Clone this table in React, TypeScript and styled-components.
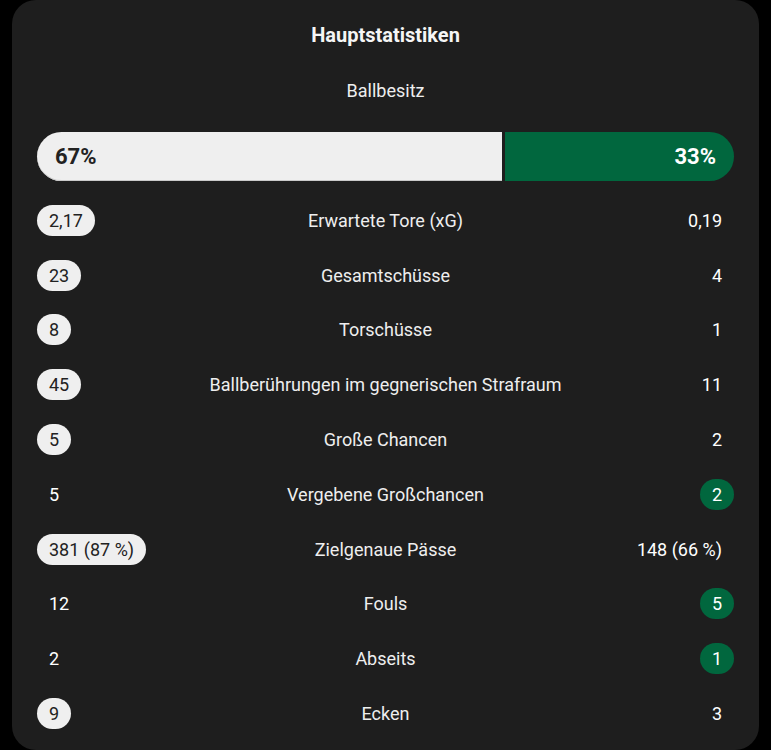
import React from "react";
import styled, { createGlobalStyle } from "styled-components";

const Global = createGlobalStyle`
  html, body { margin: 0; padding: 0; background: #000; }
  body { font-family: Roboto, "Noto Sans", sans-serif; }
`;

const Card = styled.div`
  box-sizing: border-box;
  width: 747px;
  height: 750px;
  margin-left: 12px;
  background: #1e1e1e;
  border-radius: 24px;
  padding: 0 25px;
  color: #f2f2f2;
  display: flex;
  flex-direction: column;
`;

const Title = styled.div`
  height: 70px;
  display: flex;
  align-items: center;
  justify-content: center;
  font-size: 20px;
  font-weight: 700;
  color: #f5f5f5;
`;

const SubTitle = styled.div`
  height: 40px;
  display: flex;
  align-items: center;
  justify-content: center;
  font-size: 18px;
  color: #eeeeee;
`;

const Bar = styled.div`
  margin-top: 22px;
  height: 49px;
  display: flex;
  gap: 3px;
  margin-bottom: 12px;
`;

const BarPart = styled.div<{ $home: boolean }>`
  flex: none;
  display: flex;
  align-items: center;
  justify-content: ${(p) => (p.$home ? "flex-start" : "flex-end")};
  padding: 0 18px;
  box-sizing: border-box;
  font-size: 22px;
  font-weight: 700;
  background: ${(p) => (p.$home ? "#efefef" : "#01673e")};
  color: ${(p) => (p.$home ? "#222222" : "#ffffff")};
  border-radius: ${(p) => (p.$home ? "25px 0 0 25px" : "0 25px 25px 0")};
  box-shadow: ${(p) => (p.$home ? "inset 0 -1px 0 #c9c9c9" : "none")};
`;

const Row = styled.div`
  height: 54.8px;
  display: grid;
  grid-template-columns: 1fr auto 1fr;
  align-items: center;
  font-size: 18px;
`;

const Label = styled.div`
  text-align: center;
  color: #eeeeee;
`;

const Side = styled.div<{ $right?: boolean }>`
  display: flex;
  justify-content: ${(p) => (p.$right ? "flex-end" : "flex-start")};
`;

const Value = styled.span<{ $hl?: "home" | "away" }>`
  box-sizing: border-box;
  height: 31px;
  min-width: 34px;
  padding: 0 12px;
  border-radius: 16px;
  display: inline-flex;
  align-items: center;
  justify-content: center;
  background: ${(p) =>
    p.$hl === "home" ? "#efefef" : p.$hl === "away" ? "#01673e" : "transparent"};
  color: ${(p) => (p.$hl === "home" ? "#222222" : "#ffffff")};
`;

type Stat = { label: string; home: string; away: string; win: "home" | "away" | null };

const stats: Stat[] = [
  { label: "Erwartete Tore (xG)", home: "2,17", away: "0,19", win: "home" },
  { label: "Gesamtschüsse", home: "23", away: "4", win: "home" },
  { label: "Torschüsse", home: "8", away: "1", win: "home" },
  { label: "Ballberührungen im gegnerischen Strafraum", home: "45", away: "11", win: "home" },
  { label: "Große Chancen", home: "5", away: "2", win: "home" },
  { label: "Vergebene Großchancen", home: "5", away: "2", win: "away" },
  { label: "Zielgenaue Pässe", home: "381 (87 %)", away: "148 (66 %)", win: "home" },
  { label: "Fouls", home: "12", away: "5", win: "away" },
  { label: "Abseits", home: "2", away: "1", win: "away" },
  { label: "Ecken", home: "9", away: "3", win: "home" },
];

const possession = { home: 67, away: 33 };

export default function App() {
  return (
    <>
      <Global />
      <Card>
        <Title>Hauptstatistiken</Title>
        <SubTitle>Ballbesitz</SubTitle>
        <Bar>
          <BarPart $home style={{ width: `calc((100% - 3px) * ${possession.home / 100})` }}>
            {possession.home}%
          </BarPart>
          <BarPart $home={false} style={{ width: `calc((100% - 3px) * ${possession.away / 100})` }}>
            {possession.away}%
          </BarPart>
        </Bar>
        {stats.map((s) => (
          <Row key={s.label}>
            <Side>
              <Value $hl={s.win === "home" ? "home" : undefined}>{s.home}</Value>
            </Side>
            <Label>{s.label}</Label>
            <Side $right>
              <Value $hl={s.win === "away" ? "away" : undefined}>{s.away}</Value>
            </Side>
          </Row>
        ))}
      </Card>
    </>
  );
}
